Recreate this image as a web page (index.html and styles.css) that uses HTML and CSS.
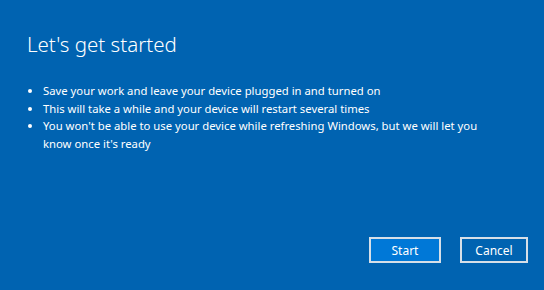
FILE: index.html
```html
<!DOCTYPE html>
<html lang="en">
<head>
    <meta charset="UTF-8">
    <title>Let's get started</title>
    <link rel="stylesheet" href="styles.css">
</head>
<body>

<div class="dialog">
    <h1 class="title">Let's get started</h1>
    <ul class="notes">
        <li>Save your work and leave your device plugged in and turned on</li>
        <li>This will take a while and your device will restart several times</li>
        <li>You won't be able to use your device while refreshing Windows, but we will let you know once it's ready</li>
    </ul>
    <div class="actions">
        <button class="btn btn-primary">Start</button>
        <button class="btn">Cancel</button>
    </div>
</div>

</body>
</html>
```

FILE: styles.css
```css
/* Page */
body {
    margin: 0;
    background-color: #0063b1;
    color: white;
    font-family: "Noto Sans", "Open Sans", sans-serif;
}

.dialog {
    width: 544px;
    height: 290px;
    box-sizing: border-box;
    padding: 29px 16px 0 27px;
    display: flex;
    flex-direction: column;
}

.title {
    margin: 0;
    font-size: 20.5px;
    font-weight: 300;
    line-height: 30px;
}

/* Bullet list */
.notes {
    margin: 23px 0 0 0;
    padding: 0 0 0 16px;
    font-size: 11.3px;
    line-height: 17.5px;
    max-width: 450px;
}

/* Buttons */
.actions {
    margin-top: auto;
    margin-bottom: 27px;
    display: flex;
    justify-content: flex-end;
    gap: 19px;
}

.btn {
    height: 26px;
    min-width: 68px;
    padding: 0 10px;
    background-color: #0063b1;
    color: white;
    border: 2px solid #d6dfe8;
    font-family: inherit;
    font-size: 12px;
}
.btn-primary {
    width: 72px;
    background-color: #0078d7;
}
```
